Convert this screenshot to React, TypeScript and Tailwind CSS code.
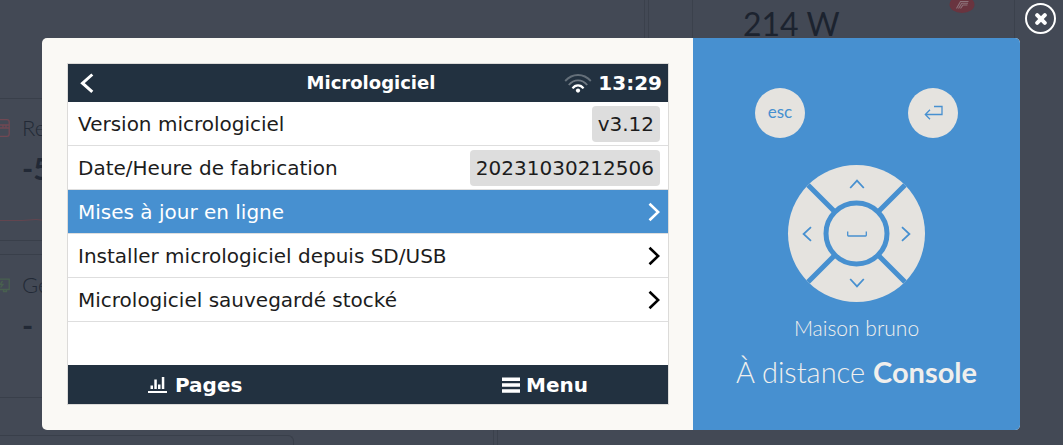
import type { ReactNode } from "react";

type MenuItem = {
  label: string;
  value?: string;
  active?: boolean;
};

const items: MenuItem[] = [
  { label: "Version micrologiciel", value: "v3.12" },
  { label: "Date/Heure de fabrication", value: "20231030212506" },
  { label: "Mises à jour en ligne", active: true },
  { label: "Installer micrologiciel depuis SD/USB" },
  { label: "Micrologiciel sauvegardé stocké" },
];

const rotations = {
  up: "",
  right: "rotate-90",
  down: "rotate-180",
  left: "-rotate-90",
};

function ArrowIcon({ dir }: { dir: keyof typeof rotations }) {
  return (
    <svg className={`h-[10px] w-4 ${rotations[dir]}`} viewBox="0 0 16 10" fill="none" stroke="currentColor" strokeWidth="1.8">
      <path d="M1.2 9 8 1.6 14.8 9" />
    </svg>
  );
}

function ChevronIcon({ className = "" }: { className?: string }) {
  return (
    <svg className={`h-5 w-3 shrink-0 ${className}`} viewBox="0 0 12 20" fill="none" stroke="currentColor" strokeWidth="2.6">
      <path d="M1.5 1.8 10.2 10 1.5 18.2" />
    </svg>
  );
}

function WifiIcon() {
  return (
    <svg className="h-5 w-7" viewBox="0 0 28 20" fill="none" stroke="#fff" strokeWidth="1.9">
      <path d="M1.2 8C8.5 0 19.5 0 26.8 8" opacity=".3" />
      <path d="M4.8 12C10 5.8 18 5.8 23.2 12" opacity=".35" />
      <path d="M8.5 15.4C11.4 11.4 16.6 11.4 19.5 15.4" strokeWidth="2.2" />
      <circle cx="14" cy="17.6" r="2.1" fill="#fff" stroke="none" />
    </svg>
  );
}

function PagesIcon() {
  return (
    <svg className="h-4 w-[19px]" viewBox="0 0 19 16" fill="currentColor">
      <path d="M0 14h19v2H0zM2.500 8.500h2.500V12H2.500zM6.300 2.500h2.500V12H6.300zM10 7.500h2.500V12H10zM13.800 0h2.500v12h-2.500z" />
    </svg>
  );
}

function BarsIcon() {
  return (
    <svg className="h-4 w-[18px]" viewBox="0 0 18 16" fill="currentColor">
      <path d="M0 .5h18v3.500H0zM0 6.300h18v3.500H0zM0 12.200h18v3.500H0z" />
    </svg>
  );
}

function RoundKey({ label, children }: { label: string; children: ReactNode }) {
  return (
    <button
      type="button"
      aria-label={label}
      className="flex size-[50px] items-center justify-center rounded-full bg-[#e5e3df] pb-[2px] text-[17px] leading-5 text-[#4790d0]"
    >
      {children}
    </button>
  );
}

function DPad() {
  return (
    <div className="grid size-[137px] overflow-hidden rounded-full bg-[#e5e3df] text-[#4790d0]">
      <svg className="col-start-1 row-start-1 size-[137px]" viewBox="0 0 137 137" stroke="#4790d0" strokeWidth="5">
        <path d="M0 0 137 137M137 0 0 137" />
        <circle cx="68.5" cy="68.5" r="30.5" fill="#e5e3df" />
      </svg>
      <div className="col-start-1 row-start-1 grid grid-cols-[38px_1fr_38px] grid-rows-[38px_1fr_38px]">
        <button type="button" aria-label="Haut" className="col-start-2 row-start-1 flex items-center justify-center">
          <ArrowIcon dir="up" />
        </button>
        <button type="button" aria-label="Gauche" className="col-start-1 row-start-2 flex items-center justify-center">
          <ArrowIcon dir="left" />
        </button>
        <button type="button" aria-label="Espace" className="col-start-2 row-start-2 flex items-center justify-center">
          <svg className="h-[6px] w-5" viewBox="0 0 20 6" fill="none" stroke="currentColor" strokeWidth="1.3">
            <path d="M.7.5V4.3Q.7 5 1.4 5H18.6Q19.3 5 19.3 4.3V.5" />
          </svg>
        </button>
        <button type="button" aria-label="Droite" className="col-start-3 row-start-2 flex items-center justify-center">
          <ArrowIcon dir="right" />
        </button>
        <button type="button" aria-label="Bas" className="col-start-2 row-start-3 flex items-center justify-center">
          <ArrowIcon dir="down" />
        </button>
      </div>
    </div>
  );
}

function Console() {
  return (
    <section className="flex flex-1 flex-col border border-[#dcdbd9] bg-white font-['DejaVu_Sans',sans-serif] text-[20px] leading-6 text-[#1c1c1c]">
      <header className="grid h-[38px] shrink-0 grid-cols-[1fr_auto_1fr] items-center bg-[#223140] pr-[6px] pl-3 font-bold text-white">
        <button type="button" aria-label="Retour" className="justify-self-start">
          <svg className="h-5 w-[14px]" viewBox="0 0 14 20" fill="none" stroke="currentColor" strokeWidth="3">
            <path d="M12.3 1.5 2.500 10.200 12.300 18.800" />
          </svg>
        </button>
        <h1 className="text-[18px]">Micrologiciel</h1>
        <div className="flex items-center gap-[6px] justify-self-end">
          <WifiIcon />
          <span>13:29</span>
        </div>
      </header>

      <ul>
        {items.map((item) => (
          <li
            key={item.label}
            className={`flex h-11 items-center justify-between border-b border-[#dedede] pr-2 pl-[10px] ${
              item.active ? "bg-[#4790d0] text-white" : ""
            }`}
          >
            <span>{item.label}</span>
            {item.value ? (
              <span className="rounded bg-[#ddd] px-[6px] py-[6px]">{item.value}</span>
            ) : (
              <ChevronIcon className={item.active ? "" : "text-black"} />
            )}
          </li>
        ))}
      </ul>

      <footer className="mt-[43px] flex h-[39px] items-center justify-between bg-[#223140] px-20 font-bold text-white">
        <button type="button" className="flex items-center gap-2">
          <PagesIcon />
          Pages
        </button>
        <button type="button" className="flex items-center gap-[6px]">
          <BarsIcon />
          Menu
        </button>
      </footer>
    </section>
  );
}

function Remote() {
  return (
    <aside className="flex w-[327px] shrink-0 flex-col items-center bg-[#4790d0] pt-[50px] text-[#f0efed]">
      <div className="flex w-full justify-between px-[62px]">
        <RoundKey label="esc">esc</RoundKey>
        <RoundKey label="Entrée">
          <svg className="h-[15px] w-[19px]" viewBox="0 0 19 15" fill="none" stroke="currentColor" strokeWidth="1.3">
            <path d="M10 1.500H18V9.500H1.500M6 4.800 1.300 9.500 6 14.200" />
          </svg>
        </RoundKey>
      </div>
      <div className="mt-[27px]">
        <DPad />
      </div>
      <p className="mt-[14px] text-[21px] leading-6 font-light">Maison bruno</p>
      <p className="mt-[14px] text-[29px] leading-9 font-light">
        À distance <strong className="font-bold">Console</strong>
      </p>
    </aside>
  );
}

// Dimmed dashboard that stays visible round the dialog
function Dashboard() {
  return (
    <div aria-hidden="true" className="absolute inset-0 overflow-hidden text-[#222936]">
      <div className="flex h-[426px]">
        <div className="w-[645px] border-r border-[#3b414c] pt-[98px]">
          <div className="flex h-[143px] w-[293px] flex-col border-y border-[#393f4a] pt-[17px]">
            <div className="flex items-center gap-3">
              <svg className="h-[18px] w-[10px]" viewBox="0 0 10 18" fill="none" stroke="#704853" strokeWidth="1.3">
                <path d="M0 .7H7Q9.200.7 9.200 3V15Q9.200 17.300 7 17.300H0M0 6H9M0 9H9M3 6V9M6 6V9" />
              </svg>
              <span className="text-[22px] leading-6 font-light">Re</span>
            </div>
            <span className="mt-[10px] ml-[22px] text-[30px] leading-9 font-bold">-5</span>
            <svg className="mt-8 h-1 w-full" viewBox="0 0 293 4" fill="none" stroke="#63454f">
              <path d="M0 2.500H22L36 1.500 46 2.500H293" />
            </svg>
          </div>
          <div className="mt-[13px] flex h-[144px] w-[293px] flex-col border-y border-[#393f4a] pt-[18px]">
            <div className="flex items-center gap-3">
              <svg className="h-[15px] w-[10px]" viewBox="0 0 10 15" fill="none" stroke="#48604f" strokeWidth="1.3">
                <path d="M0 1.200H9.200V11.500H0M3.500 11.500V13.500H6.500V11.500M2.500 3 0 6.500H3L.5 9.500" />
              </svg>
              <span className="text-[22px] leading-6 font-light">Ge</span>
            </div>
            <span className="mt-[10px] ml-[22px] text-[30px] leading-9 font-bold">-</span>
          </div>
        </div>
        <div className="ml-[3px] flex-1 border-l border-[#3b414c] pl-[43px]">
          <div className="flex h-full w-[323px] items-start border-x border-[#3b414c] pl-[50px]">
            <span className="mt-1 text-[32px] leading-10 text-[#1c232f]">214 W</span>
            <svg className="-mt-1 ml-auto mr-[39px] h-[17px] w-[26px]" viewBox="0 0 26 17">
              <ellipse cx="13" cy="8.5" rx="12.5" ry="8.5" fill="#69343f" />
              <path d="M7.500 12.500 11.500 5.500H19.500M11.500 12.500 14 9H18.500M9.500 12.500 12.800 7.300H19" fill="none" stroke="#8d727a" strokeWidth="1.1" />
            </svg>
          </div>
        </div>
      </div>
      <div className="flex h-40">
        <div className="w-[494px] border-r border-[#3b414c] pt-[9px]">
          <div className="h-full w-[294px] rounded-tr-md border-t border-r border-[#393f4a]" />
        </div>
        <div className="ml-[3px] flex-1 border-l border-[#3b414c]" />
      </div>
    </div>
  );
}

export default function App() {
  return (
    <main className="relative min-h-screen overflow-hidden bg-[#434955] px-[42px] pt-[38px] pb-[15px] font-[Lato,sans-serif]">
      <Dashboard />
      <div role="dialog" aria-label="Console à distance" className="relative mr-px flex overflow-hidden rounded-[5px] bg-[#faf9f5]">
        <div className="flex flex-1 py-[25px] pr-6 pl-[25px]">
          <Console />
        </div>
        <Remote />
      </div>
      <button
        type="button"
        aria-label="Fermer"
        className="absolute top-[3px] right-[7px] flex size-[31px] items-center justify-center rounded-full border-2 border-white text-white"
      >
        <svg className="size-3" viewBox="0 0 12 12" fill="none" stroke="currentColor" strokeWidth="4" strokeLinecap="round">
          <path d="M2.200 2.200 9.800 9.800M9.800 2.200 2.200 9.800" />
        </svg>
      </button>
    </main>
  );
}
